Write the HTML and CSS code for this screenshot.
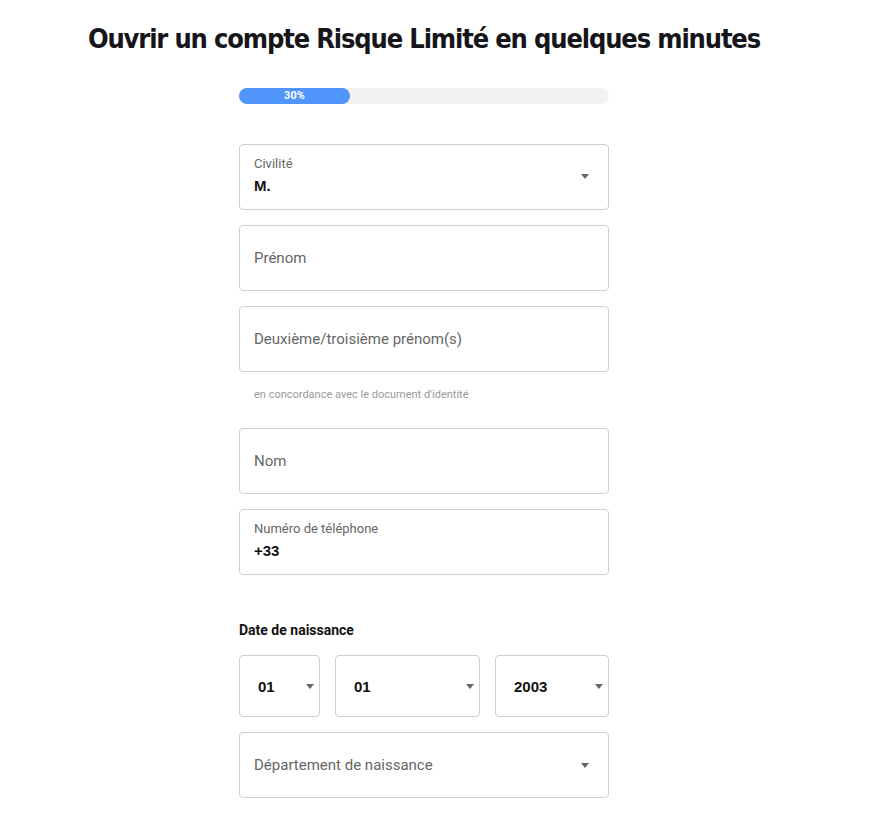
FILE: index.html
```html
<!DOCTYPE html>
<html lang="fr">
<head>
<meta charset="utf-8">
<title>Ouvrir un compte</title>
<link rel="stylesheet" href="styles.css">
</head>
<body>
<div class="page">
  <h1 class="title">Ouvrir un compte Risque Limité en quelques minutes</h1>
  <form class="form">
    <div class="progress"><div class="progress-fill" style="width:30%">30%</div></div>

    <div class="field field-select field-filled">
      <div class="field-body">
        <span class="field-label">Civilité</span>
        <span class="field-value">M.</span>
      </div>
      <span class="caret"></span>
    </div>

    <div class="field"><span class="field-placeholder">Prénom</span></div>

    <div class="field"><span class="field-placeholder">Deuxième/troisième prénom(s)</span></div>
    <p class="hint">en concordance avec le document d'identité</p>

    <div class="field"><span class="field-placeholder">Nom</span></div>

    <div class="field field-filled">
      <div class="field-body">
        <span class="field-label">Numéro de téléphone</span>
        <span class="field-value">+33</span>
      </div>
    </div>

    <div class="section-label">Date de naissance</div>
    <div class="date-row">
      <div class="date-box date-day"><span class="date-value">01</span><span class="caret"></span></div>
      <div class="date-box date-month"><span class="date-value">01</span><span class="caret"></span></div>
      <div class="date-box date-year"><span class="date-value">2003</span><span class="caret"></span></div>
    </div>

    <div class="field field-select"><span class="field-placeholder">Département de naissance</span><span class="caret"></span></div>
  </form>
</div>
</body>
</html>
```
FILE: styles.css
```css
* { box-sizing: border-box; }
body {
  margin: 0;
  background: #fff;
  font-family: "Roboto", "Liberation Sans", sans-serif;
  color: #111;
}
.page {
  width: 848px;
  padding-top: 22px;
}
.title {
  margin: 0;
  text-align: center;
  font-family: "DejaVu Sans Condensed", "DejaVu Sans", sans-serif;
  font-weight: 700;
  font-size: 27px;
  line-height: 34px;
  color: #15151a;
  letter-spacing: -1.15px;
}
.form {
  width: 370px;
  margin: 32px auto 0;
  display: flex;
  flex-direction: column;
}
.progress {
  height: 16px;
  background: #f2f2f2;
  border-radius: 8px;
  margin-bottom: 40px;
}
.progress-fill {
  height: 16px;
  background: #4f95fa;
  border-radius: 8px;
  color: #fff;
  font-size: 11px;
  font-weight: 700;
  line-height: 16px;
  text-align: center;
}
.field {
  height: 66px;
  border: 1px solid #cfcfcf;
  border-radius: 4px;
  padding: 0 14px;
  display: flex;
  align-items: center;
  justify-content: space-between;
  margin-bottom: 15px;
}
.field-filled {
  align-items: flex-start;
  padding-top: 11px;
}
.field-filled .caret {
  margin-top: 18px;
}
.field-body {
  display: flex;
  flex-direction: column;
  gap: 6px;
}
.field-label {
  font-size: 13px;
  line-height: 15px;
  color: #666;
}
.field-value {
  font-family: "Liberation Sans", Arial, sans-serif;
  font-weight: 700;
  font-size: 15px;
  line-height: 18px;
  color: #111;
}
.field-placeholder {
  font-size: 15px;
  color: #666;
}
.caret {
  width: 0;
  height: 0;
  border-left: 4.5px solid transparent;
  border-right: 4.5px solid transparent;
  border-top: 5px solid #666;
  margin-right: 5px;
}
.hint {
  margin: 1px 0 26px 15px;
  font-size: 11px;
  line-height: 14px;
  color: #9a9a9a;
}
.section-label {
  margin-top: 31px;
  font-weight: 700;
  font-size: 14px;
  line-height: 18px;
  color: #111;
}
.date-row {
  display: grid;
  grid-template-columns: 81px 145px 1fr;
  gap: 15px;
  margin-top: 16px;
  margin-bottom: 15px;
}
.date-box {
  height: 62px;
  border: 1px solid #cfcfcf;
  border-radius: 4px;
  padding: 0 0 0 18px;
  display: flex;
  align-items: center;
  justify-content: space-between;
}
.date-value {
  font-family: "Liberation Sans", Arial, sans-serif;
  font-weight: 700;
  font-size: 15px;
  color: #111;
}
```
